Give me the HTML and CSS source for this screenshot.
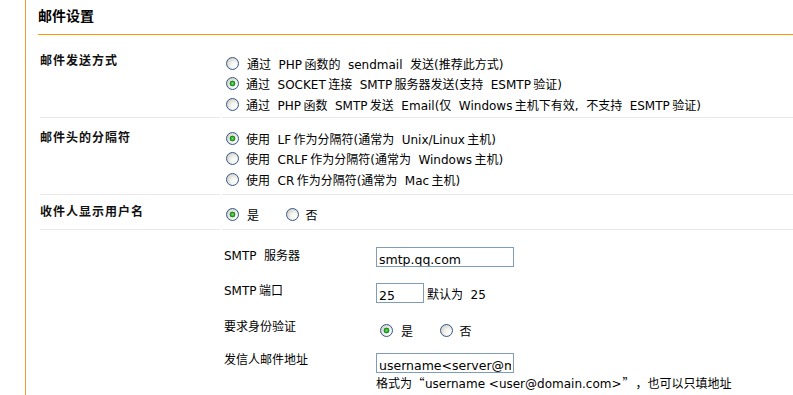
FILE: index.html
```html
<!DOCTYPE html>
<html lang="zh-CN">
<head>
<meta charset="utf-8">
<title>邮件设置</title>
<link rel="stylesheet" href="styles.css">
</head>
<body>
<div class="panel">
  <h1 class="title">邮件设置</h1>
  <div class="rows">
    <div class="row r1">
      <div class="label">邮件发送方式</div>
      <div class="field">
        <label class="opt lead"><input type="radio" name="mailsend"><span>通过 PHP&thinsp;函数的 sendmail 发送(推荐此方式)</span></label>
        <label class="opt"><input type="radio" name="mailsend" checked><span>通过 SOCKET&thinsp;连接 SMTP&thinsp;服务器发送(支持 ESMTP&thinsp;验证)</span></label>
        <label class="opt"><input type="radio" name="mailsend"><span>通过 PHP&thinsp;函数 SMTP&thinsp;发送 Email(仅 Windows&thinsp;主机下有效, 不支持 ESMTP&thinsp;验证)</span></label>
      </div>
    </div>
    <div class="row r2">
      <div class="label">邮件头的分隔符</div>
      <div class="field">
        <label class="opt"><input type="radio" name="delim" checked><span>使用 LF&thinsp;作为分隔符(通常为 Unix/Linux&thinsp;主机)</span></label>
        <label class="opt"><input type="radio" name="delim"><span>使用 CRLF&thinsp;作为分隔符(通常为 Windows&thinsp;主机)</span></label>
        <label class="opt"><input type="radio" name="delim"><span>使用 CR&thinsp;作为分隔符(通常为 Mac&thinsp;主机)</span></label>
      </div>
    </div>
    <div class="row r3">
      <div class="label">收件人显示用户名</div>
      <div class="field inline">
        <label class="opt"><input type="radio" name="showname" checked><span>是</span></label>
        <label class="opt"><input type="radio" name="showname"><span>否</span></label>
      </div>
    </div>
  </div>
  <div class="sub">
    <div class="srow sa">
      <div class="slabel">SMTP 服务器</div>
      <div class="sfield"><input class="text wide" type="text" value="smtp.qq.com"></div>
    </div>
    <div class="srow sb">
      <div class="slabel">SMTP&thinsp;端口</div>
      <div class="sfield port"><input class="text narrow" type="text" value="25"><span>默认为 25</span></div>
    </div>
    <div class="srow sc">
      <div class="slabel">要求身份验证</div>
      <div class="sfield inline">
        <label class="opt"><input type="radio" name="auth" checked><span>是</span></label>
        <label class="opt"><input type="radio" name="auth"><span>否</span></label>
      </div>
    </div>
    <div class="srow sd">
      <div class="slabel">发信人邮件地址</div>
      <div class="sfield col">
        <input class="text wide" type="text" value="username&lt;server@mail.com&gt;">
        <div class="hint">格式为<span class="q q-open">“</span>username &lt;user@domain.com&gt;<span class="q q-close">”</span><span class="q">，</span>也可以只填地址</div>
      </div>
    </div>
  </div>
</div>
</body>
</html>
```

FILE: styles.css
```css
html, body {
  margin: 0;
  padding: 0;
  background: #fff;
}
body {
  font-family: "DejaVu Sans", "Noto Sans CJK SC", sans-serif;
  font-size: 12px;
  color: #000;
  word-spacing: 3.7px;
  overflow: hidden;
}
.panel {
  margin-left: 25px;
  border-left: 1px solid #f39a2c;
  padding-left: 12px;
  height: 395px;
  box-sizing: border-box;
}
.title {
  margin: 0;
  font-size: 14px;
  font-weight: bold;
  height: 34px;
  line-height: 30px;
  border-bottom: 1px solid #ff9900;
  font-family: "Noto Sans CJK SC", sans-serif;
}
.rows {
  margin-left: 2px;
}
.row {
  display: grid;
  grid-template-columns: 180px 1fr;
  column-gap: 2px;
}
.row > div {
  border-bottom: 1px solid #e9e9e9;
}
.label {
  font-weight: bold;
  letter-spacing: 1px;
  line-height: 20px;
  color: #111;
}
.r1 .label { padding-top: 16px; }
.r2 .label { padding-top: 10px; }
.r3 .label { padding-top: 7px; }
.field {
  display: flex;
  flex-direction: column;
}
.r1 .field { padding: 18px 0 2.5px; }
.r2 .field { padding: 10px 0 4.5px; }
.r3 .field { padding: 9px 0 4.5px; }
.field.inline, .sfield.inline {
  flex-direction: row;
}
.opt {
  display: flex;
  align-items: center;
  height: 20.5px;
  white-space: nowrap;
}
.opt input {
  -webkit-appearance: none;
  appearance: none;
  width: 13px;
  height: 13px;
  margin: 0 7px 0 4px;
  border: 1px solid #34568a;
  border-radius: 50%;
  box-sizing: border-box;
  background: radial-gradient(circle at 68% 68%, #ffffff 0%, #f3f3ef 35%, #d6d6ce 75%, #c4c4bc 100%);
  flex: none;
}
.opt input:checked {
  background:
    radial-gradient(circle at 50% 50%, #7ce07c 0, #2fae2f 1.6px, #137a13 2.6px, rgba(19,122,19,0) 3.2px),
    radial-gradient(circle at 68% 68%, #ffffff 0%, #f3f3ef 35%, #d6d6ce 75%, #c4c4bc 100%);
}
.opt.lead span { margin-left: 1px; }
.inline .opt input { margin-right: 8px; }
.inline .opt + .opt { margin-left: 23px; }
.inline .opt + .opt input { margin-right: 6.5px; }

.sub {
  margin-left: 186px;
}
.srow {
  display: grid;
  grid-template-columns: 152px 1fr;
}
.sa { padding-top: 17px; }
.sb { padding-top: 16px; }
.sc { padding-top: 17px; }
.sd { padding-top: 13px; }
.slabel {
  line-height: 14px;
  white-space: nowrap;
}
.sa .slabel { padding-top: 2px; }
.sb .slabel { padding-top: 1px; }
.sfield {
  display: flex;
  align-items: center;
}
.sfield.col {
  flex-direction: column;
  align-items: flex-start;
}
.sc .sfield .opt {
  height: 20px;
}
.text {
  box-sizing: border-box;
  height: 20px;
  border: 1px solid #7f9db9;
  padding: 5px 2px 0;
  margin: 0;
  font-family: "DejaVu Sans", sans-serif;
  font-size: 12.5px;
  word-spacing: 0;
  color: #000;
  background: #fff;
  outline: none;
}
.wide { width: 138px; }
.narrow { width: 48px; }
.port span { margin-left: 3px; }
.hint {
  line-height: 19px;
  white-space: nowrap;
  word-spacing: 0;
}
.q {
  font-family: "Noto Sans CJK SC", sans-serif;
}
.q-open {
  display: inline-block;
  width: 13px;
  text-align: center;
}
.q-close {
  display: inline-block;
  width: 14px;
  text-align: center;
}
```
